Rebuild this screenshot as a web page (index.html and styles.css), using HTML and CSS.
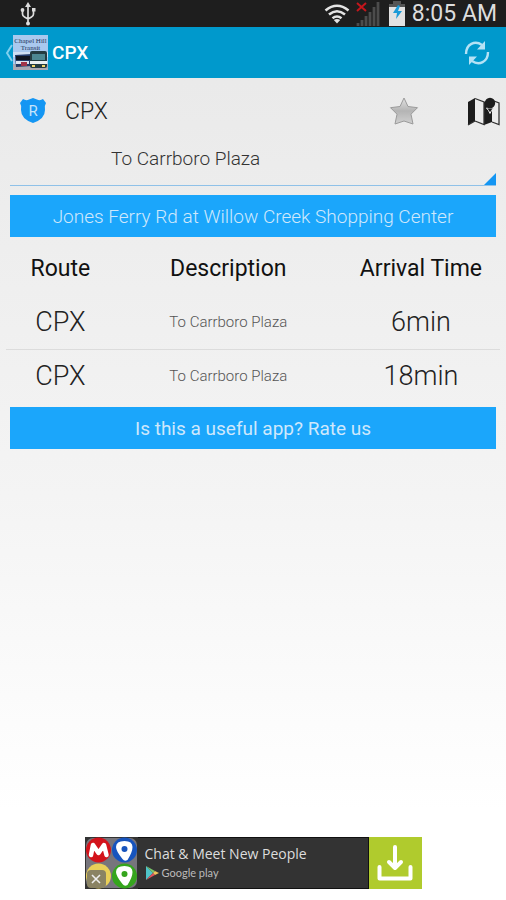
FILE: index.html
```html
<!DOCTYPE html>
<html lang="en">
<head>
    <meta charset="UTF-8">
    <meta name="viewport" content="width=device-width, initial-scale=1.0">
    <title>CPX</title>
    <link rel="stylesheet" href="styles.css">
</head>
<body>

<div class="status-bar">
    <svg class="usb" width="16" height="24" viewBox="0 0 16 24" fill="none" stroke="#ddd" stroke-width="1.700">
        <path d="M8 4v17M2.500 8v4q0 2 2 3l3.500 2M13.500 8v4q0 2-2 3L8 17"/>
        <path d="M8 0l3 5H5z" fill="#ddd" stroke="none"/>
        <circle cx="8" cy="21.500" r="2" fill="#ddd" stroke="none"/>
        <circle cx="2.500" cy="8" r="1.900" fill="#ddd" stroke="none"/>
        <path d="M12 6h3.500v3.500H12z" fill="#ddd" stroke="none"/>
    </svg>
    <svg width="26" height="20" viewBox="0 0 26 20" fill="none" stroke="#e4e4e4" stroke-width="2.600">
        <path d="M1.500 6.500q11.500-9.500 23 0M5 10.500q8-6.500 16 0M8.500 14.300q4.500-3.600 9 0"/>
        <path d="M9.800 16q3.200-2 6.400 0L13 19.500z" fill="#e4e4e4" stroke="none"/>
    </svg>
    <svg width="26" height="25" viewBox="0 0 26 25" fill="none">
        <path d="M2 25v-3M6 25v-6M10 25V15M14 25V11M18 25V6M22 25V1" stroke="#4c4c4c" stroke-width="2.800"/>
        <path d="M1 2l9 8M10 2l-9 8" stroke="#c4161c" stroke-width="2"/>
    </svg>
    <svg width="18" height="25" viewBox="0 0 18 25">
        <path d="M5 0h8v3h4v22H1V3h4z" fill="#555"/>
        <path d="M1 6h16v19H1z" fill="#e2e2e2"/>
        <path d="M10 4L5 12h4l-1 6 6-8h-4l2-5z" fill="#1b9bd8"/>
    </svg>
    <span class="clock">8:05 AM</span>
</div>

<header class="action-bar">
    <button class="home" aria-label="Back">
        <svg width="8" height="18" viewBox="0 0 8 18" fill="none" stroke="#7fd0ee" stroke-width="2">
            <path d="M7 1L2 9l5 8"/>
        </svg>
        <svg width="35" height="35" viewBox="0 0 35 35">
            <rect width="35" height="35" fill="#a9c9ee"/>
            <path d="M0 17h35v5H0z" fill="#cfdff2"/>
            <path d="M0 29h35v6H0z" fill="#aaa9b4"/>
            <text x="17.500" y="8" class="logo-text">Chapel Hill</text>
            <text x="17.500" y="15" class="logo-text">Transit</text>
            <path d="M2 20l17-1v12L3 32z" fill="#233a68"/>
            <path d="M3 21h14v4H3z" fill="#10151f"/>
            <path d="M3 26h13v3H3z" fill="#dce4f0"/>
            <path d="M8 27h6v4H8z" fill="#a1344a"/>
            <rect x="17" y="16" width="17" height="17" rx="2" fill="#243b40"/>
            <path d="M19 19h13v6H19z" fill="#4d8791"/>
            <path d="M17 26h17v3H17z" fill="#e9eef0"/>
            <path d="M19 30h3v2h-3zM29 30h3v2h-3z" fill="#f3d66a"/>
        </svg>
    </button>
    <h1 class="title">CPX</h1>
    <button class="refresh" aria-label="Refresh">
        <svg width="26" height="26" viewBox="0 0 26 26" fill="none" stroke="#b5e2f5" stroke-width="2.400">
            <path d="M2 14C2 4 11 0 18 5M24 12c0 10-9 14-16 9"/>
            <path d="M21 1v8.500h-8zM5 25v-8.500h8z" fill="#b5e2f5" stroke="none"/>
        </svg>
    </button>
</header>

<main class="content">
    <div class="route-bar">
        <svg width="28" height="26" viewBox="0 0 28 26">
            <path d="M4 1q3 2 6 .5L14 0l4 1.500Q21 3 24 1l3 4q-2 3-1 7 0 9-12 13Q2 21 2 12q1-4-1-7z" fill="#1496f3"/>
            <text x="14" y="18" class="shield-text">R</text>
        </svg>
        <h2 class="route-name">CPX</h2>
        <button class="star" aria-label="Favorite">
            <svg width="30" height="30" viewBox="0 0 30 30">
                <defs>
                    <linearGradient id="silver" x1="0" y1="0" x2="0" y2="1">
                        <stop offset="0" stop-color="#e2e2e2"/>
                        <stop offset="0.500" stop-color="#b4b4b4"/>
                        <stop offset="1" stop-color="#d0d0d0"/>
                    </linearGradient>
                </defs>
                <path d="M15 2l4 8.500 9.500 1.200-6.500 6.500L24 28l-9-3-9 3 2-9.800-6.500-6.500 9.500-1.200z" fill="url(#silver)" stroke="#9b9b9b" stroke-linejoin="round"/>
            </svg>
        </button>
        <button class="map" aria-label="Map">
            <svg width="33" height="29" viewBox="0 0 33 29">
                <path d="M1 5l7-4v23l-7 4zM17 5l8-3v23l-8 3z" fill="#1c1c1c"/>
                <path d="M8 1.500L17 5v22.500L8 24M25 25l7 2.500V6l-5-2M1 28l7-4" fill="none" stroke="#333" stroke-width="1.300"/>
                <path d="M23 16.500q-1-3-3.500-5.500h7Q24 13.500 23 16.500z" fill="#1c1c1c" stroke="#ededed"/>
                <circle cx="23" cy="6" r="5.200" fill="#1c1c1c"/>
            </svg>
        </button>
    </div>

    <div class="spinner">
        <select aria-label="Direction">
            <option>To Carrboro Plaza</option>
        </select>
    </div>

    <button class="bar-button stop">Jones Ferry Rd at Willow Creek Shopping Center</button>

    <table class="arrivals">
        <thead>
            <tr><th>Route</th><th>Description</th><th>Arrival Time</th></tr>
        </thead>
        <tbody>
            <tr><td>CPX</td><td class="description">To Carrboro Plaza</td><td>6min</td></tr>
            <tr><td>CPX</td><td class="description">To Carrboro Plaza</td><td>18min</td></tr>
        </tbody>
    </table>

    <button class="bar-button">Is this a useful app? Rate us</button>
</main>

<aside class="ad">
    <div class="ad-icon">
        <svg width="53" height="52" viewBox="0 0 53 52">
            <rect width="53" height="52" fill="#333"/>
            <rect x="1" y="1" width="51" height="50" rx="7" fill="#77757c"/>
            <circle cx="13.500" cy="13" r="12.500" fill="#d3131b"/>
            <circle cx="39.500" cy="13" r="12.500" fill="#1754bd"/>
            <circle cx="13.500" cy="39" r="12.500" fill="#e9cf58"/>
            <circle cx="39.500" cy="39" r="12.500" fill="#35a51d"/>
            <path d="M6 18L8 8l5.500 8L19 8l2.500 10" fill="none" stroke="#fff" stroke-width="4.500" stroke-linecap="round" stroke-linejoin="round"/>
            <path d="M39.500 4q8 0 8 6 0 5-5 13-3 2-5-1Q31 14 31 10q0-6 8.500-6z" fill="#fff"/>
            <circle cx="39.500" cy="12" r="3" fill="#1754bd"/>
            <path d="M39.500 29q8 0 8 6 0 5-5 13-3 2-5-1Q31 39 31 35q0-6 8.500-6z" fill="#fff"/>
            <circle cx="39.500" cy="37" r="3" fill="#35a51d"/>
        </svg>
        <button class="ad-close" aria-label="Close ad">
            <svg width="10" height="10" viewBox="0 0 10 10" stroke="#eee" stroke-width="1.600"><path d="M1 1l8 8M9 1L1 9"/></svg>
        </button>
    </div>
    <div class="ad-text">
        <span>Chat &amp; Meet New People</span>
        <span class="store">
            <svg width="14" height="14" viewBox="0 0 14 14">
                <path d="M1 0l7 7-7 7z" fill="#4fc3c9"/>
                <path d="M1 0l9 5-2 2z" fill="#79c66b"/>
                <path d="M1 14l9-5-2-2z" fill="#e0525c"/>
                <path d="M10 5l4 2-4 2-2-2z" fill="#f0c35a"/>
            </svg>
            <span>Google play</span>
        </span>
    </div>
    <button class="ad-download" aria-label="Download">
        <svg width="36" height="36" viewBox="0 0 36 36" fill="none" stroke="#fff" stroke-width="4" stroke-linecap="round" stroke-linejoin="round">
            <path d="M2.500 22v11.500h31V22"/>
            <path d="M18 2v20M12 17l6 6 6-6"/>
        </svg>
    </button>
</aside>

</body>
</html>
```

FILE: styles.css
```css
* {
    box-sizing: border-box;
}

body {
    display: flex;
    flex-direction: column;
    min-height: 100vh;
    margin: 0;
    font-family: Roboto, sans-serif;
    color: #222;
    background: linear-gradient(#e8e8e8, #f4f4f4 55%, #fff 90%);
}

button {
    display: flex;
    align-items: center;
    justify-content: center;
    padding: 0;
    border: none;
    background: none;
    font-family: inherit;
    cursor: pointer;
}

svg {
    display: block;
    flex-shrink: 0;
}

.status-bar {
    display: flex;
    align-items: center;
    gap: 6px;
    height: 27px;
    padding: 0 9px 0 20px;
    background: #1e1e1e;
}

.usb {
    margin-right: auto;
}

.clock {
    font-size: 23px;
    line-height: 27px;
    color: #ddd;
}

.action-bar {
    display: flex;
    align-items: center;
    height: 51px;
    padding: 0 16px 0 5px;
    background: #0099cc;
}

.logo-text {
    font: 7px "Liberation Serif", serif;
    text-anchor: middle;
    fill: #26355c;
}

.title {
    flex: 1;
    margin: 0 0 0 4px;
    font-size: 19px;
    font-weight: 500;
    color: #fff;
}

.content {
    flex: 1;
}

.route-bar {
    display: flex;
    align-items: center;
    height: 66px;
    padding: 0 6px 0 19px;
}

.shield-text {
    font: 15px Roboto, sans-serif;
    text-anchor: middle;
    fill: #c5e4fb;
}

.route-name {
    flex: 1;
    margin: 0 0 0 18px;
    font-size: 23px;
    font-weight: 300;
}

.map {
    margin-left: 48px;
}

.spinner {
    position: relative;
    margin: 0 10px 9px;
    border-bottom: 1px solid #8fc1e8;
}

.spinner::after {
    content: "";
    position: absolute;
    right: 0;
    bottom: 0;
    border-left: 12px solid transparent;
    border-bottom: 12px solid #1496f3;
}

.spinner select {
    display: block;
    width: 100%;
    height: 41px;
    padding: 0 0 12px 101px;
    border: none;
    appearance: none;
    background: none;
    font: 300 19px Roboto, sans-serif;
    color: #333;
}

.bar-button {
    width: calc(100% - 20px);
    height: 42px;
    margin: 0 10px;
    background: #1ba6fb;
    font-size: 19px;
    color: #cfe8fb;
}

.stop {
    font-weight: 300;
}

.arrivals {
    width: calc(100% - 12px);
    margin: 4px 6px;
    table-layout: fixed;
    border-collapse: collapse;
    text-align: center;
}

.arrivals th {
    height: 54px;
    padding: 0;
    font-size: 23px;
    font-weight: 400;
    color: #111;
}

.arrivals th:first-child {
    width: 22%;
}

.arrivals th:last-child {
    width: 32%;
}

.arrivals td {
    height: 54px;
    padding: 0;
    font-size: 27px;
    font-weight: 300;
}

.arrivals tr + tr td {
    border-top: 1px solid #dcdcdc;
}

.arrivals .description {
    font-size: 15px;
    color: #555;
}

.ad {
    display: flex;
    align-self: center;
    height: 52px;
    margin-bottom: 11px;
    background: #333;
}

.ad-icon {
    position: relative;
}

.ad-close {
    position: absolute;
    left: 2px;
    bottom: 1px;
    width: 19px;
    height: 18px;
    border-radius: 4px;
    background: #8a8363;
}

.ad-text {
    display: flex;
    flex-direction: column;
    justify-content: center;
    gap: 2px;
    width: 231px;
    padding-left: 7px;
    border: 1px solid #111;
    border-left: none;
    font: 14px/18px "Open Sans", sans-serif;
    color: #ddd;
}

.store {
    display: flex;
    align-items: center;
    gap: 3px;
    font: 11px/16px Lato, sans-serif;
    color: #bbb;
}

.ad-download {
    width: 53px;
    background: #b0cb2d;
}
```
